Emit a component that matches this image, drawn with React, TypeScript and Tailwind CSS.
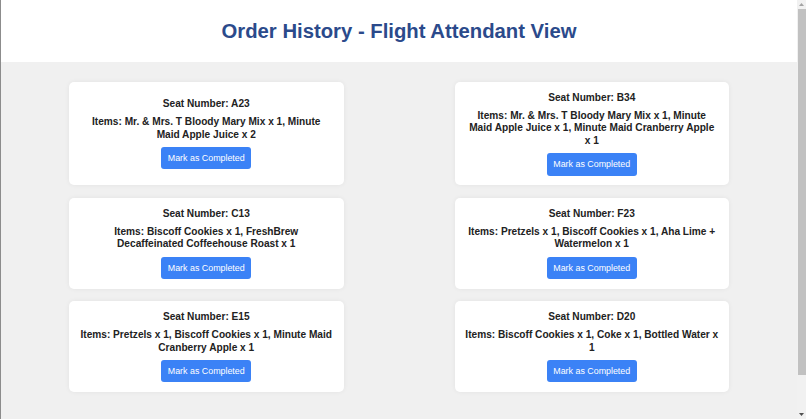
import React from "react";

type Order = { seat: string; lines: string[] };

const orders: Order[] = [
  { seat: "A23", lines: ["Items: Mr. & Mrs. T Bloody Mary Mix x 1, Minute", "Maid Apple Juice x 2"] },
  {
    seat: "B34",
    lines: [
      "Items: Mr. & Mrs. T Bloody Mary Mix x 1, Minute",
      "Maid Apple Juice x 1, Minute Maid Cranberry Apple",
      "x 1",
    ],
  },
  { seat: "C13", lines: ["Items: Biscoff Cookies x 1, FreshBrew", "Decaffeinated Coffeehouse Roast x 1"] },
  { seat: "F23", lines: ["Items: Pretzels x 1, Biscoff Cookies x 1, Aha Lime +", "Watermelon x 1"] },
  { seat: "E15", lines: ["Items: Pretzels x 1, Biscoff Cookies x 1, Minute Maid", "Cranberry Apple x 1"] },
  { seat: "D20", lines: ["Items: Biscoff Cookies x 1, Coke x 1, Bottled Water x", "1"] },
];

function OrderCard({ order }: { order: Order }) {
  return (
    <div className="flex flex-col items-center justify-center rounded-[5px] bg-white px-[6px] py-[9.75px] text-center shadow-[0_0_5px_rgba(0,0,0,0.06)]">
      <p className="mb-[5.5px] text-[10.15px] font-bold leading-[12.5px] text-[#222]">Seat Number: {order.seat}</p>
      <p className="mb-[6px] whitespace-nowrap text-[10.15px] font-bold leading-[12.5px] text-[#222]">
        {order.lines.map((l, i) => (
          <React.Fragment key={i}>
            {i > 0 && <br />}
            {l}
          </React.Fragment>
        ))}
      </p>
      <button className="rounded-[3px] bg-[#3b82f6] px-[6.4px] py-[6.2px] text-[8.9px] leading-[10px] text-white">
        Mark as Completed
      </button>
    </div>
  );
}

function Scrollbar() {
  return (
    <div className="flex h-full w-[9px] flex-col bg-[#f1f1f1]">
      <div className="flex h-[9px] items-center justify-center">
        <svg width="5" height="3" viewBox="0 0 5 3">
          <path d="M2.5 0 L5 3 L0 3 Z" fill="#a3a3a3" />
        </svg>
      </div>
      <div className="ml-[1px] h-[366px] bg-[#c1c1c1]" />
      <div className="flex-1" />
      <div className="flex h-[9px] items-center justify-center">
        <svg width="5" height="3" viewBox="0 0 5 3">
          <path d="M0 0 L5 0 L2.5 3 Z" fill="#505050" />
        </svg>
      </div>
    </div>
  );
}

export default function App() {
  return (
    <div className="flex h-[419px] w-[806px] overflow-hidden border-l border-[#8c8c8c] bg-[#f0f0f0] font-['Liberation_Sans',Arial,sans-serif]">
      <div className="flex min-w-0 flex-1 flex-col">
        <header className="flex h-[62px] shrink-0 items-center justify-center bg-white">
          <h1 className="text-[20.3px] font-bold leading-none text-[#2b4a8b]">Order History - Flight Attendant View</h1>
        </header>
        <main className="grid grid-cols-2 gap-x-[111px] gap-y-[12.5px] px-[68px] pt-[20px]">
          {orders.map((o) => (
            <OrderCard key={o.seat} order={o} />
          ))}
        </main>
      </div>
      <Scrollbar />
    </div>
  );
}
